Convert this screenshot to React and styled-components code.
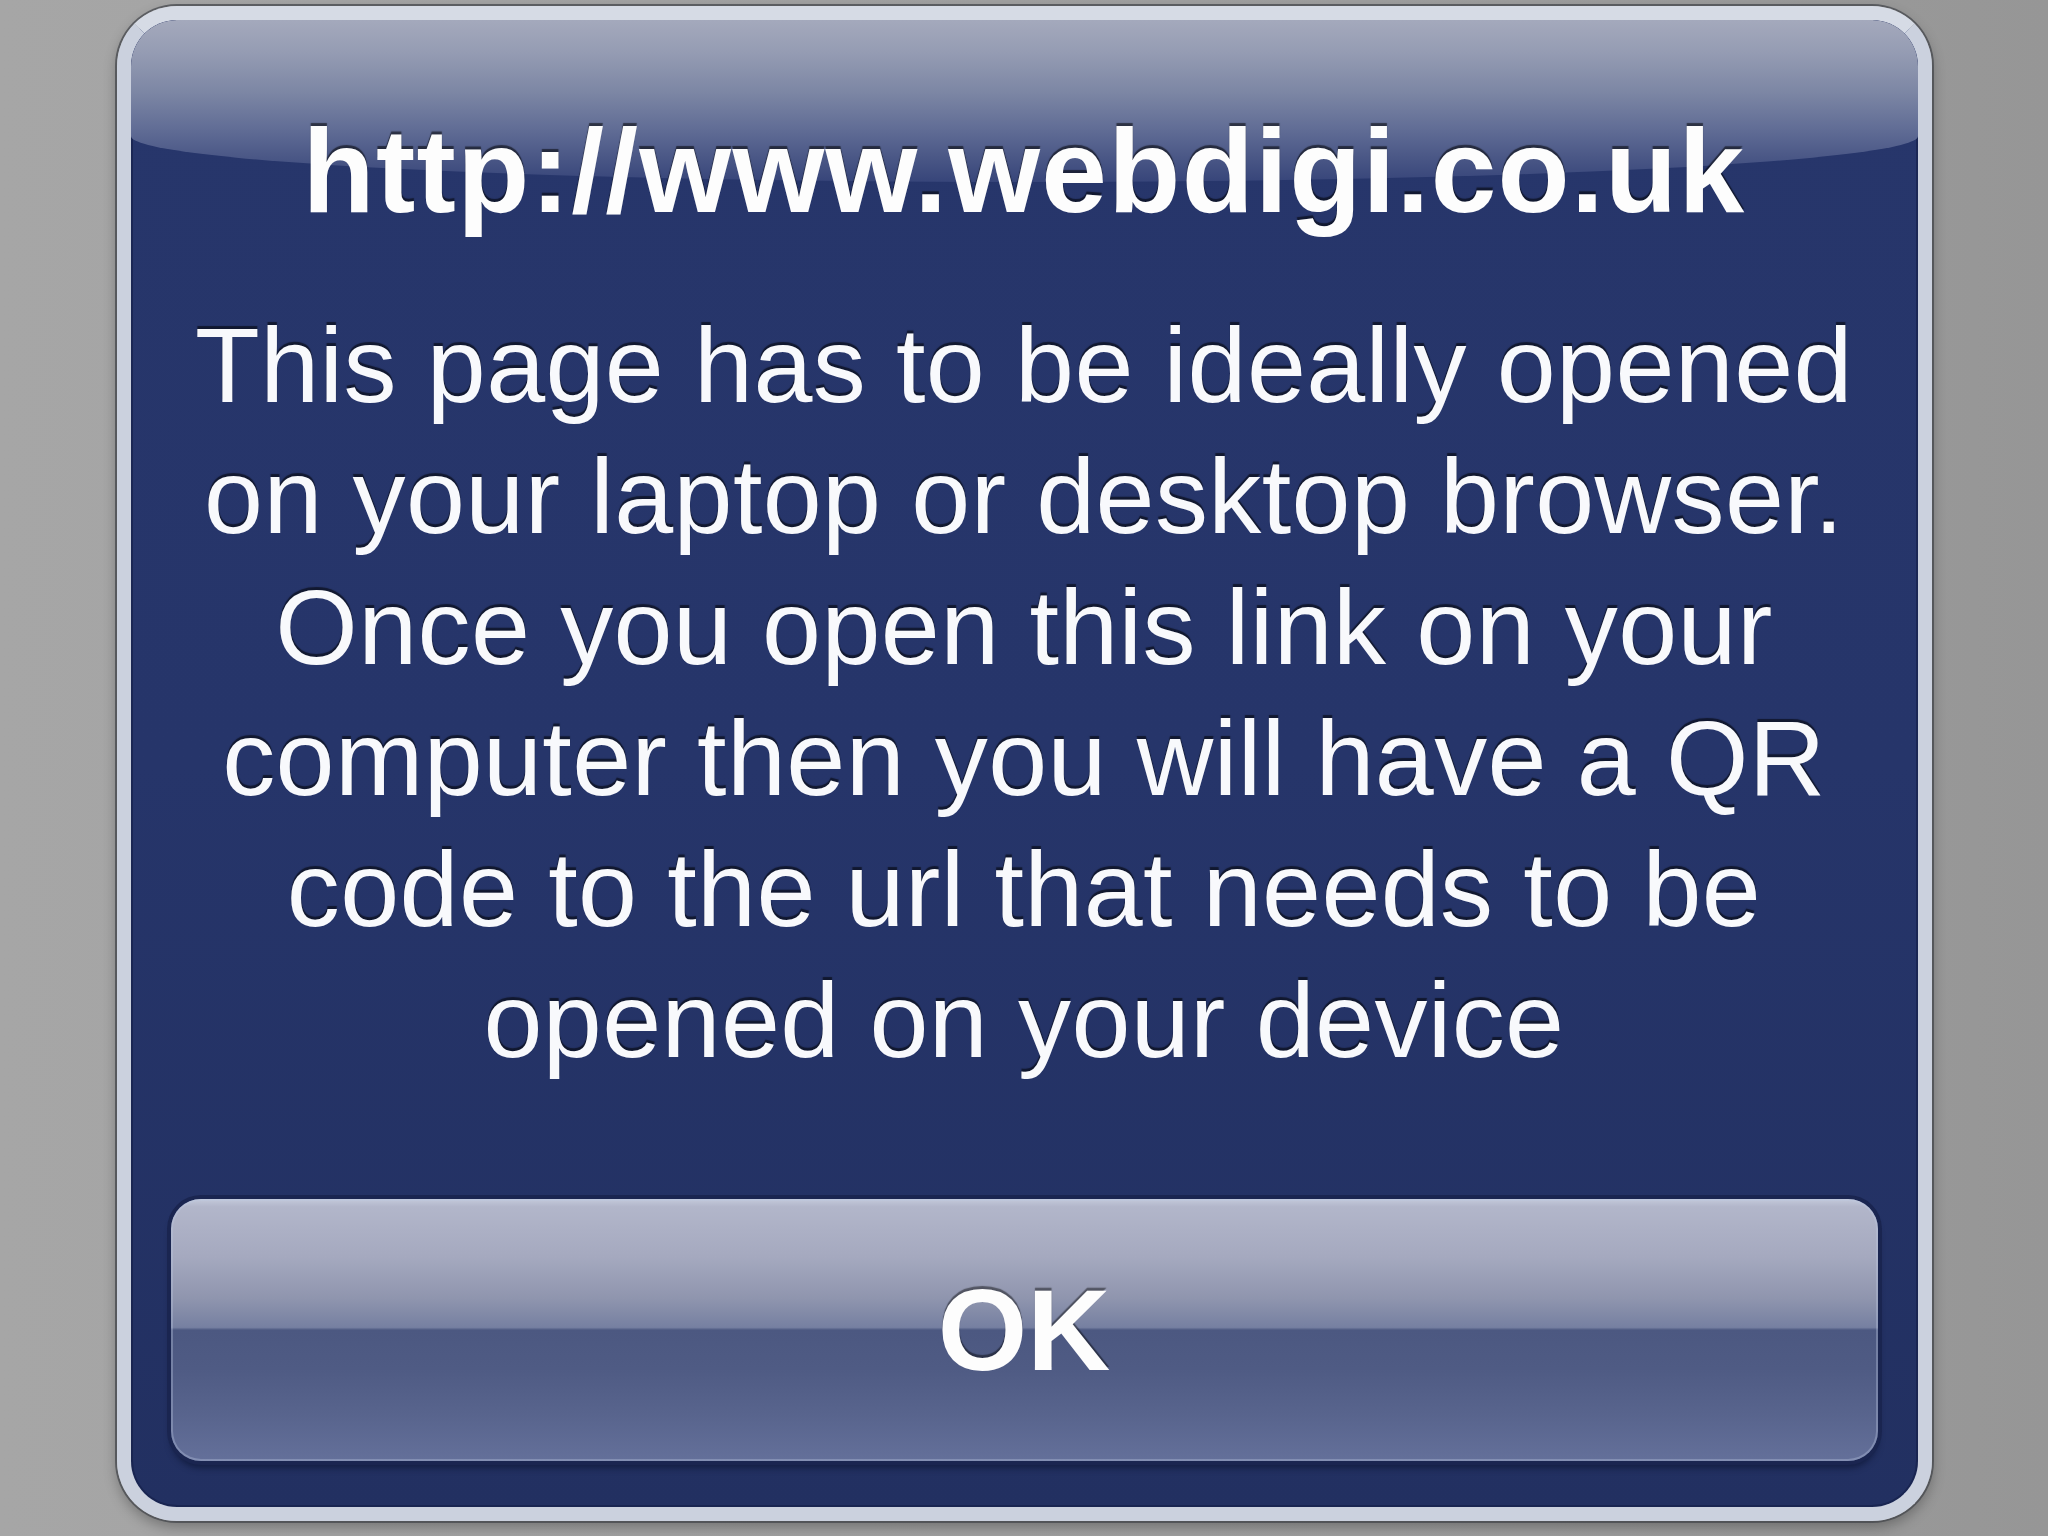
import React from "react";
import styled, { createGlobalStyle } from "styled-components";

const Global = createGlobalStyle`
  html, body { margin: 0; padding: 0; }
  body {
    background: #a0a0a0;
    font-family: "Liberation Sans", Arial, Helvetica, sans-serif;
  }
`;

const Page = styled.div`
  width: 2048px;
  height: 1536px;
  box-sizing: border-box;
  padding-top: 6px;
  display: flex;
  justify-content: center;
  align-items: flex-start;
  background: linear-gradient(90deg, #a6a6a6 0%, #a1a1a1 40%, #9d9d9d 75%, #969696 100%);
  overflow: hidden;
`;

const Panel = styled.div`
  position: relative;
  width: 1815px;
  height: 1515px;
  box-sizing: border-box;
  border: 14px solid #cbd1de;
  border-top-color: #d6dbe5;
  border-radius: 60px;
  background: linear-gradient(180deg, #27366b 0%, #26356a 50%, #223061 100%);
  box-shadow:
    0 0 0 2px rgba(70, 72, 78, 0.75),
    0 6px 14px rgba(0, 0, 0, 0.3),
    inset 0 0 0 2px rgba(20, 30, 70, 0.6);
  display: flex;
  flex-direction: column;
  align-items: stretch;
  padding: 86px 40px 46px;
  overflow: hidden;

  &::before {
    content: "";
    position: absolute;
    top: 0;
    left: 0;
    right: 0;
    height: 162px;
    border-radius: 46px 46px 50% 50% / 46px 46px 46px 46px;
    background: linear-gradient(
      180deg,
      #a4a9bc 0%,
      #959cb3 20%,
      #7c86a4 45%,
      #606c95 68%,
      #4a5786 85%,
      #37457a 100%
    );
    z-index: 0;
  }
`;

const Title = styled.div`
  position: relative;
  z-index: 1;
  height: 130px;
  font-size: 118px;
  line-height: 130px;
  font-weight: 700;
  letter-spacing: 1.3px;
  color: #fdfdfd;
  text-align: center;
  white-space: nowrap;
  text-shadow: 0 -3px 1px rgba(0, 0, 0, 0.55);
`;

const Body = styled.div`
  position: relative;
  z-index: 1;
  margin-top: 64px;
  display: flex;
  flex-direction: column;
  align-items: center;
`;

const Line = styled.div`
  font-size: 106px;
  line-height: 131px;
  height: 131px;
  font-weight: 400;
  letter-spacing: 0.4px;
  color: #f8f9fc;
  white-space: nowrap;
  text-shadow: 0 -3px 1px rgba(0, 0, 0, 0.55);
`;

const Button = styled.button`
  position: relative;
  z-index: 1;
  margin-top: 113px;
  height: 262px;
  border: none;
  border-radius: 30px;
  padding: 0;
  cursor: pointer;
  font-family: "Liberation Sans", Arial, Helvetica, sans-serif;
  font-size: 115px;
  line-height: 1;
  font-weight: 700;
  color: #fdfdfd;
  text-shadow: 0 -3px 1px rgba(0, 0, 0, 0.45);
  display: flex;
  align-items: center;
  justify-content: center;
  background: linear-gradient(
    180deg,
    #c3c9da 0%,
    #b2b6ca 3%,
    #a5a9bf 22%,
    #8f95ae 38%,
    #7680a1 49%,
    #4c5881 50%,
    #4f5b84 65%,
    #58648d 82%,
    #64709a 100%
  );
  box-shadow:
    inset 0 0 0 2px rgba(190, 200, 225, 0.35),
    0 0 0 4px #1a2550,
    0 7px 6px rgba(8, 14, 40, 0.55);
`;

const lines = [
  "This page has to be ideally opened",
  "on your laptop or desktop browser.",
  "Once you open this link on your",
  "computer then you will have a QR",
  "code to the url that needs to be",
  "opened on your device",
];

export default function App() {
  return (
    <>
      <Global />
      <Page>
        <Panel>
          <Title>http://www.webdigi.co.uk</Title>
          <Body>
            {lines.map((l) => (
              <Line key={l}>{l}</Line>
            ))}
          </Body>
          <Button type="button">OK</Button>
        </Panel>
      </Page>
    </>
  );
}
